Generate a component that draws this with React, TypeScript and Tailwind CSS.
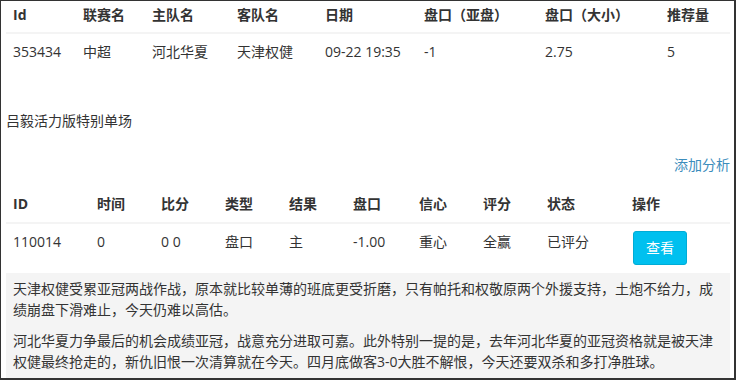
import React from 'react';

const font = { fontFamily: '"Open Sans", "Noto Sans CJK SC", sans-serif' };

const matchCols = [
  { label: 'Id', w: 'w-[70px]', value: '353434' },
  { label: '联赛名', w: 'w-[69px]', value: '中超' },
  { label: '主队名', w: 'w-[85px]', value: '河北华夏' },
  { label: '客队名', w: 'w-[88px]', value: '天津权健' },
  { label: '日期', w: 'w-[99px]', value: '09-22 19:35' },
  { label: '盘口（亚盘）', w: 'w-[121px]', value: '-1' },
  { label: '盘口（大小）', w: 'w-[122px]', value: '2.75' },
  { label: '推荐量', w: 'w-[70px]', value: '5' },
];

const tipCols = [
  { label: 'ID', w: 'w-[84px]', value: '110014' },
  { label: '时间', w: 'w-[64px]', value: '0' },
  { label: '比分', w: 'w-[64px]', value: '0 0' },
  { label: '类型', w: 'w-[64px]', value: '盘口' },
  { label: '结果', w: 'w-[64px]', value: '主' },
  { label: '盘口', w: 'w-[66px]', value: '-1.00' },
  { label: '信心', w: 'w-[64px]', value: '重心' },
  { label: '评分', w: 'w-[64px]', value: '全赢' },
  { label: '状态', w: 'w-[85px]', value: '已评分' },
  { label: '操作', w: 'w-[105px]', value: '' },
];

export default function App() {
  return (
    <div
      className="w-[736px] h-[380px] overflow-hidden bg-white text-[#333] text-[14px] leading-5 border-[#333] border-l border-t border-r-2 border-b-2 pl-[5px] pr-[4px]"
      style={font}
    >
      {/* 比赛信息 */}
      <table className="w-[724px] table-fixed border-collapse">
        <thead>
          <tr className="border-b-2 border-[#f4f4f4]">
            {matchCols.map((c) => (
              <th key={c.label} className={`${c.w} pl-[7px] pt-[4px] pb-[7px] text-left font-bold`}>
                {c.label}
              </th>
            ))}
          </tr>
        </thead>
        <tbody>
          <tr>
            {matchCols.map((c) => (
              <td key={c.label} className="pl-[7px] py-2 align-top whitespace-nowrap">
                {c.value}
              </td>
            ))}
          </tr>
        </tbody>
      </table>

      <p className="mt-[41px]">吕毅活力版特别单场</p>

      <div className="mt-[24px] text-right">
        <a className="text-[#3c8dbc]">添加分析</a>
      </div>

      {/* 推荐列表 */}
      <table className="mt-[11px] w-[724px] table-fixed border-collapse">
        <thead>
          <tr className="border-b-2 border-[#f4f4f4]">
            {tipCols.map((c) => (
              <th key={c.label} className={`${c.w} pl-[7px] py-2 text-left font-bold`}>
                {c.label}
              </th>
            ))}
          </tr>
        </thead>
        <tbody>
          <tr>
            {tipCols.map((c) =>
              c.label === '操作' ? (
                <td key={c.label} className="pl-[8px] pt-[7px] pb-[8px] align-top">
                  <button className="h-[34px] px-3 rounded-[3px] bg-[#00c0ef] border border-[#00acd6] text-white leading-5">
                    查看
                  </button>
                </td>
              ) : (
                <td key={c.label} className="pl-[7px] py-2 align-top whitespace-nowrap">
                  {c.value}
                </td>
              )
            )}
          </tr>
        </tbody>
      </table>

      <div className="bg-[#f4f4f4] px-[7px] pt-[5px] pb-3 leading-[21px]">
        <p>
          天津权健受累亚冠两战作战，原本就比较单薄的班底更受折磨，只有帕托和权敬原两个外援支持，土炮不给力，成绩崩盘下滑难止，今天仍难以高估。
        </p>
        <p className="mt-[10px]">
          河北华夏力争最后的机会成绩亚冠，战意充分进取可嘉。此外特别一提的是，去年河北华夏的亚冠资格就是被天津权健最终抢走的，新仇旧恨一次清算就在今天。四月底做客3-0大胜不解恨，今天还要双杀和多打净胜球。
        </p>
      </div>
    </div>
  );
}
